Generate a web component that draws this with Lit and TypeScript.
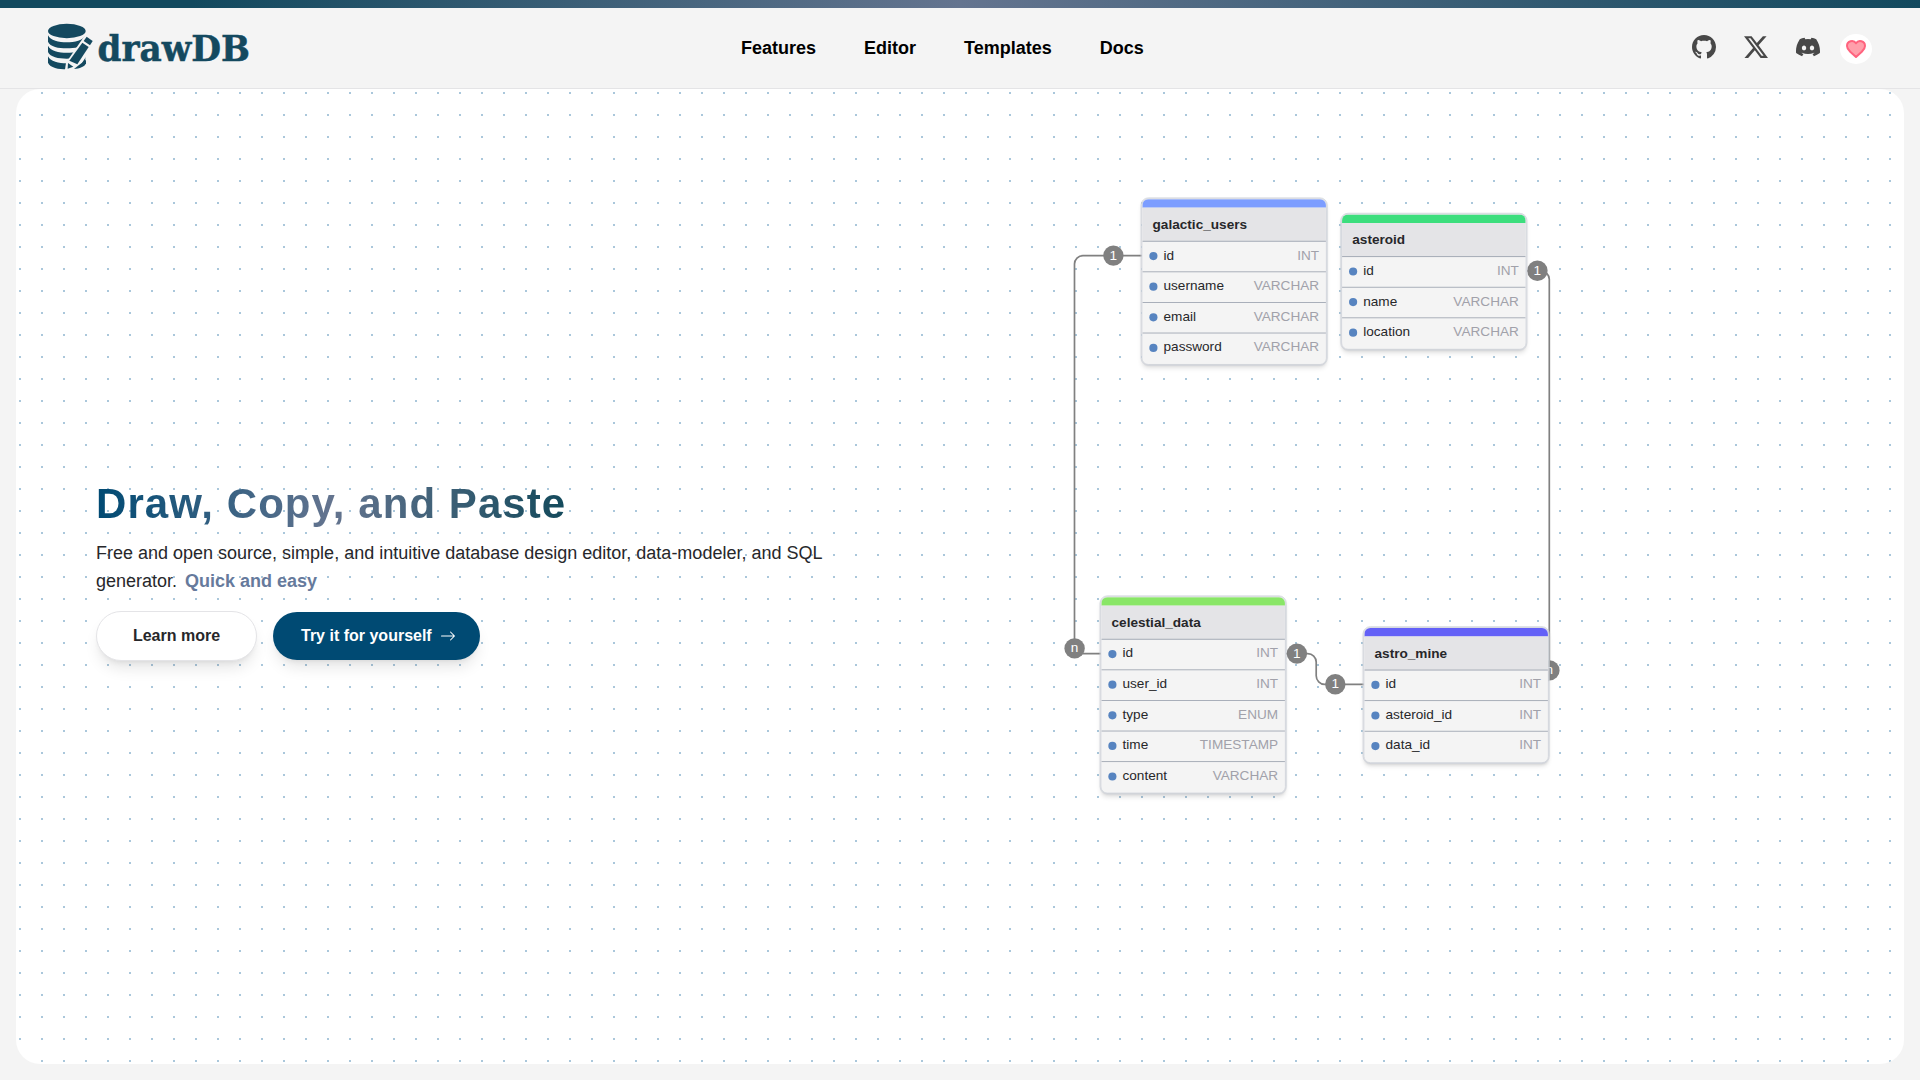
import { LitElement, html, svg, css } from "lit";
import { customElement, property } from "lit/decorators.js";

interface Field {
  name: string;
  type: string;
}

interface Table {
  name: string;
  color: string;
  x: number;
  y: number;
  fields: Field[];
}

const SCALE = 0.85;
const TABLE_WIDTH = 218;
const HEADER_HEIGHT = 52;
const ROW_HEIGHT = 36;

const f = (name: string, type: string): Field => ({ name, type });

const TABLES: Table[] = [
  {
    name: "galactic_users",
    color: "#7c9dff",
    x: 1141.5,
    y: 198.3,
    fields: [f("id", "INT"), f("username", "VARCHAR"), f("email", "VARCHAR"), f("password", "VARCHAR")],
  },
  {
    name: "celestial_data",
    color: "#89e667",
    x: 1100.5,
    y: 596.3,
    fields: [f("id", "INT"), f("user_id", "INT"), f("type", "ENUM"), f("time", "TIMESTAMP"), f("content", "VARCHAR")],
  },
  {
    name: "astro_mine",
    color: "#6360f7",
    x: 1363.5,
    y: 627.1,
    fields: [f("id", "INT"), f("asteroid_id", "INT"), f("data_id", "INT")],
  },
  {
    name: "asteroid",
    color: "#3cde7d",
    x: 1341.2,
    y: 213.7,
    fields: [f("id", "INT"), f("name", "VARCHAR"), f("location", "VARCHAR")],
  },
];

const LINKS = [
  "M1142 255.6 H1083 A8.5 8.5 0 0 0 1074.5 264.1 V645.2 A8.5 8.5 0 0 0 1083 653.7 H1101",
  "M1527 270.8 H1540.8 A8.5 8.5 0 0 1 1549.3 279.3 V676 A8.5 8.5 0 0 1 1540.8 684.5 H1500",
  "M1286 653.6 H1307.7 A8.5 8.5 0 0 1 1316.2 662.1 V675.8 A8.5 8.5 0 0 0 1324.7 684.3 H1364",
];

const BADGES: [number, number, string][] = [
  [1113.4, 255.6, "1"],
  [1074.6, 648.4, "n"],
  [1537.4, 270.8, "1"],
  [1549.4, 670.4, "n"],
  [1296.9, 653.6, "1"],
  [1335.3, 684.3, "1"],
];

@customElement("brand-logo")
export class BrandLogo extends LitElement {
  static styles = css`
    :host {
      display: block;
      width: 210px;
      height: 56px;
      margin-top: -2px;
    }
    svg {
      display: block;
      overflow: visible;
    }
    .ink {
      fill: #14495f;
    }
    .halo {
      fill: #f4f4f4;
    }
    .name {
      fill: #14495f;
      stroke: #14495f;
      stroke-width: 0.5;
      font-family: "DejaVu Serif", serif;
      font-weight: 700;
      font-size: 35.5px;
    }
  `;

  render() {
    const band = (y: number) => svg`
      <path class="ink" d="M144 ${y} C150 ${y + 16} 178 ${y + 21} 200 ${y + 21} C224 ${y + 21} 250 ${y + 16} 256 ${y}
        V${y + 19} C250 ${y + 34} 224 ${y + 39} 200 ${y + 39} C176 ${y + 39} 150 ${y + 34} 144 ${y + 19} Z" />`;
    return html`
      <svg width="210" height="56" viewBox="0 -5 210 56">
        <g transform="translate(-48 -24) scale(.33333)">
          <ellipse class="ink" cx="200.500" cy="93" rx="56.500" ry="21.500" />
          ${band(106)} ${band(137)} ${band(169)}
          <path class="halo" d="M259 100 L290 122 L228 216 L194 216 L198 188 Z" />
          <path class="ink" d="M260 110 L278 123 L270 136 L251 123 Z" />
          <path class="ink" d="M247 128 L266 141 L232 193 L208 182 Z" />
          <path class="ink" d="M204 189 L220 200 L203 206 Z" />
          <path class="ink" d="M236 196 L258 180 V190 C254 201 238 206 222 207 Z" />
        </g>
        <text class="name" x="49.500" y="37" textLength="152.500" lengthAdjust="spacingAndGlyphs">drawDB</text>
      </svg>
    `;
  }
}

@customElement("top-header")
export class TopHeader extends LitElement {
  static styles = css`
    :host {
      display: block;
    }
    .strip {
      height: 8px;
      background: linear-gradient(90deg, #12495e 0%, #12495e 10%, #64748f 50%, #12495e 100%);
    }
    .bar {
      box-sizing: border-box;
      height: 81px;
      border-bottom: 1px solid #e4e4e6;
      display: grid;
      grid-template-columns: 693px 1fr auto;
      padding: 0 48px;
      align-items: center;
    }
    .nav {
      display: flex;
      gap: 48px;
      font-size: 18px;
      line-height: 28px;
      font-weight: 700;
      color: #000;
    }
    .social {
      display: flex;
      align-items: center;
      gap: 28px;
      color: #484848;
    }
    .icon {
      display: block;
      width: 24px;
      height: 24px;
      margin-top: -2px;
      fill: currentColor;
    }
    .sponsor {
      display: flex;
      align-items: center;
      justify-content: center;
      width: 32px;
      height: 30px;
      margin: 2px 0 0 -8px;
      border-radius: 50%;
      background: #fff;
    }
    .heart {
      width: 20px;
      height: 18px;
      fill: #ff9fab;
      stroke: #ff637e;
      stroke-width: 2;
      stroke-linejoin: round;
    }
  `;

  render() {
    return html`
      <div class="strip"></div>
      <div class="bar">
        <brand-logo></brand-logo>
        <nav class="nav">
          <span>Features</span><span>Editor</span><span>Templates</span><span>Docs</span>
        </nav>
        <div class="social">
          <svg class="icon" viewBox="0 0 16 16">
            <path
              d="M8 0C3.58 0 0 3.58 0 8c0 3.54 2.29 6.53 5.47 7.59.4.07.55-.17.55-.38 0-.19-.01-.82-.01-1.49-2.01.37-2.53-.49-2.69-.94-.09-.23-.48-.94-.82-1.13-.28-.15-.68-.52-.01-.53.63-.01 1.08.58 1.23.82.72 1.21 1.87.87 2.33.66.07-.52.28-.87.51-1.07-1.78-.2-3.64-.89-3.64-3.95 0-.87.31-1.59.82-2.15-.08-.2-.36-1.02.08-2.12 0 0 .67-.21 2.2.82.64-.18 1.32-.27 2-.27s1.36.09 2 .27c1.53-1.04 2.2-.82 2.2-.82.44 1.1.16 1.92.08 2.12.51.56.82 1.27.82 2.15 0 3.07-1.87 3.75-3.65 3.95.29.25.54.73.54 1.48 0 1.07-.01 1.93-.01 2.2 0 .21.15.46.55.38A8.01 8.01 0 0 0 16 8c0-4.42-3.58-8-8-8"
            />
          </svg>
          <svg class="icon" viewBox="0 0 16 16">
            <path
              d="M12.6.75h2.454l-5.36 6.142L16 15.25h-4.937l-3.867-5.07-4.425 5.07H.316l5.733-6.57L0 .75h5.063l3.495 4.633L12.601.75Zm-.86 13.028h1.36L4.323 2.145H2.865z"
            />
          </svg>
          <svg class="icon" viewBox="0 0 16 16">
            <path
              d="M13.545 2.907a13.2 13.2 0 0 0-3.257-1.011.05.05 0 0 0-.052.025c-.141.25-.297.577-.406.833a12.2 12.2 0 0 0-3.658 0 8 8 0 0 0-.412-.833.05.05 0 0 0-.052-.025c-1.125.194-2.22.534-3.257 1.011a.04.04 0 0 0-.021.018C.356 6.024-.213 9.047.066 12.032q.003.022.021.037a13.3 13.3 0 0 0 3.995 2.02.05.05 0 0 0 .056-.019q.463-.63.818-1.329a.05.05 0 0 0-.01-.059l-.018-.011a9 9 0 0 1-1.248-.595.05.05 0 0 1-.02-.066l.015-.019q.127-.095.248-.195a.05.05 0 0 1 .051-.007c2.619 1.196 5.454 1.196 8.041 0a.05.05 0 0 1 .053.007q.121.1.248.195a.05.05 0 0 1-.004.085 8 8 0 0 1-1.249.594.05.05 0 0 0-.03.03.05.05 0 0 0 .003.041c.24.465.515.909.817 1.329a.05.05 0 0 0 .056.019 13.2 13.2 0 0 0 4.001-2.02.05.05 0 0 0 .021-.037c.334-3.451-.559-6.449-2.366-9.106a.03.03 0 0 0-.02-.019m-8.198 7.307c-.789 0-1.438-.724-1.438-1.612s.637-1.613 1.438-1.613c.807 0 1.45.73 1.438 1.613 0 .888-.637 1.612-1.438 1.612m5.316 0c-.788 0-1.438-.724-1.438-1.612s.637-1.613 1.438-1.613c.807 0 1.451.73 1.438 1.613 0 .888-.631 1.612-1.438 1.612"
            />
          </svg>
          <span class="sponsor">
            <svg class="heart" viewBox="0 0 20 18">
              <path
                d="M19 5.9 A4.900 4.900 0 0 0 10 3.300 A4.900 4.900 0 0 0 1 5.900 C1 8.600 2.600 10.100 4.200 11.700 L10 17 L15.800 11.700 C17.400 10.100 19 8.600 19 5.900 Z"
              />
            </svg>
          </span>
        </div>
      </div>
    `;
  }
}

@customElement("schema-table")
export class SchemaTable extends LitElement {
  @property({ attribute: false }) table!: Table;

  static styles = css`
    :host {
      display: block;
    }
    .card {
      box-sizing: border-box;
      border: 1px solid #d1d5db;
      outline: 0.6px solid #d1d5db;
      border-radius: 8px;
      overflow: hidden;
      background: #f4f4f4;
      font-size: 16px;
      line-height: 24px;
      box-shadow: 0 4px 6px -1px rgb(0 0 0 / 0.12), 0 2px 4px -2px rgb(0 0 0 / 0.12);
    }
    .color {
      height: 10px;
    }
    .title {
      box-sizing: border-box;
      height: 40px;
      padding: 0 12px;
      display: flex;
      align-items: center;
      font-weight: 700;
      color: #27272a;
      background: #e4e4e7;
      border-bottom: 1px solid #9ca3af;
    }
    .row {
      box-sizing: border-box;
      height: 36px;
      padding: 0 8px 3px 7.5px;
      display: flex;
      align-items: center;
      border-bottom: 1px solid #9ca3af;
      color: #27272a;
    }
    .row:last-child {
      border-bottom-color: transparent;
    }
    .dot {
      flex: none;
      display: block;
      width: 10px;
      height: 10px;
      margin: 2px 7.4px 0 0;
      overflow: visible;
      fill: #5784c0;
    }
    .type {
      margin-left: auto;
      color: #a1a1aa;
    }
  `;

  render() {
    const t = this.table;
    return html`
      <div class="card">
        <div class="color" style="background:${t.color}"></div>
        <div class="title">${t.name}</div>
        ${t.fields.map(
          (x) => html`<div class="row">
            <svg class="dot" viewBox="0 0 10 10"><circle cx="5" cy="5" r="4.8" /></svg
            ><span>${x.name}</span><span class="type">${x.type}</span>
          </div>`
        )}
      </div>
    `;
  }
}

@customElement("schema-canvas")
export class SchemaCanvas extends LitElement {
  static styles = css`
    :host {
      display: block;
      height: 975px;
    }
    .canvas {
      display: block;
      width: 1042px;
      height: 975px;
    }
    .link {
      fill: none;
      stroke: #808080;
      stroke-width: 1.7;
    }
    .badge {
      fill: #808080;
    }
    .label {
      fill: #fff;
      font-size: 13.6px;
      text-anchor: middle;
    }
    .frame {
      overflow: visible;
    }
  `;

  render() {
    return html`
      <svg class="canvas" viewBox="862 89 1042 975">
        ${LINKS.map((d) => svg`<path class="link" d=${d} />`)}
        ${BADGES.map(
          ([x, y, label]) => svg`
            <circle class="badge" cx=${x} cy=${y} r="10.2" />
            <text class="label" x=${x} y=${y + 3.9}>${label}</text>`
        )}
        ${TABLES.map(
          (t) => svg`
            <foreignObject class="frame" width=${TABLE_WIDTH} height=${HEADER_HEIGHT + t.fields.length * ROW_HEIGHT}
              transform="translate(${t.x} ${t.y}) scale(${SCALE})">
              <schema-table .table=${t}></schema-table>
            </foreignObject>`
        )}
      </svg>
    `;
  }
}

@customElement("app-root")
export class AppRoot extends LitElement {
  static styles = css`
    :host {
      display: block;
      box-sizing: border-box;
      height: 1080px;
      overflow: hidden;
      background: #f4f4f4;
      font-family: "Liberation Sans", Arial, sans-serif;
      color: #27272a;
    }
    .hero {
      height: 975px;
      margin: 0 16px;
      border-radius: 24px;
      overflow: hidden;
      display: grid;
      grid-template-columns: 846px 1fr;
      background-color: #fff;
      background-image: conic-gradient(from 90deg at 20px 20px, #aac7db 90deg, transparent 0);
      background-size: 22px 22px;
      background-position: 5px 5px;
    }
    .copy {
      padding: 391px 0 0 80px;
    }
    .headline {
      display: inline-block;
      margin: 0;
      font-size: 42px;
      line-height: 48px;
      font-weight: 700;
      letter-spacing: 0.025em;
      background: linear-gradient(90deg, #004a73, #64748f, #144a5c);
      -webkit-background-clip: text;
      background-clip: text;
      color: transparent;
    }
    .lead {
      margin: 11px 0 0;
      width: 750px;
      font-size: 18px;
      line-height: 28px;
    }
    .accent {
      display: inline-block;
      margin-left: 3px;
      font-weight: 700;
      color: #667a9c;
    }
    .actions {
      margin-top: 16px;
      display: flex;
      align-items: center;
      gap: 16px;
    }
    .button {
      box-sizing: border-box;
      display: flex;
      align-items: center;
      border-radius: 25px;
      font-size: 16px;
      line-height: 24px;
      font-weight: 700;
      box-shadow: 0 10px 15px -3px rgb(0 0 0 / 0.1), 0 4px 6px -4px rgb(0 0 0 / 0.1);
    }
    .secondary {
      height: 50px;
      width: 161px;
      justify-content: center;
      border: 1px solid #e4e4e7;
      background: #fff;
    }
    .primary {
      height: 48px;
      width: 207px;
      padding-left: 28px;
      background: #004a73;
      color: #fff;
    }
    .arrow {
      width: 16px;
      height: 16px;
      margin-left: 8px;
      fill: #fff;
    }
  `;

  render() {
    return html`
      <top-header></top-header>
      <main class="hero">
        <section class="copy">
          <h1 class="headline">Draw, Copy, and Paste</h1>
          <p class="lead">
            Free and open source, simple, and intuitive database design editor, data-modeler, and SQL generator.
            <span class="accent">Quick and easy</span>
          </p>
          <div class="actions">
            <div class="button secondary">Learn more</div>
            <div class="button primary">
              Try it for yourself
              <svg class="arrow" viewBox="0 0 16 16">
                <path
                  fill-rule="evenodd"
                  d="M1 8a.5.5 0 0 1 .5-.5h11.793l-3.147-3.146a.5.5 0 0 1 .708-.708l4 4a.5.5 0 0 1 0 .708l-4 4a.5.5 0 0 1-.708-.708L13.293 8.500H1.500A.5.5 0 0 1 1 8"
                />
              </svg>
            </div>
          </div>
        </section>
        <schema-canvas></schema-canvas>
      </main>
    `;
  }
}
